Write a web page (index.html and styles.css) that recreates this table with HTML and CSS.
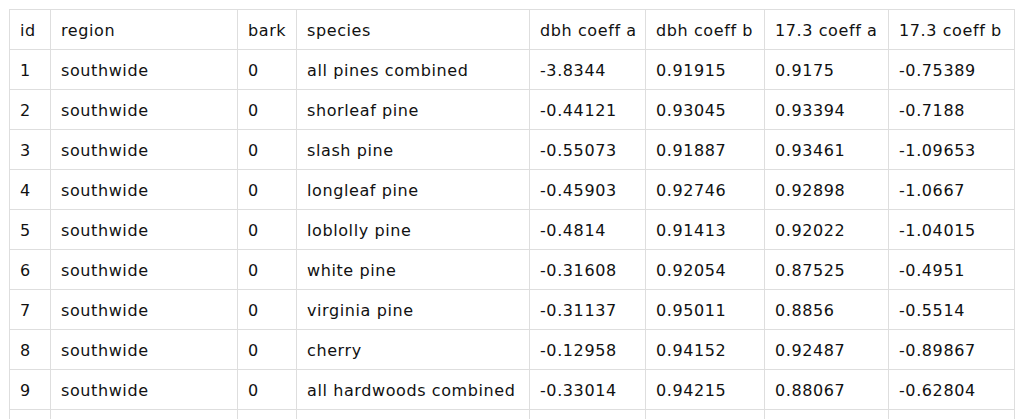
FILE: index.html
```
<!DOCTYPE html>
<html>
<head>
<meta charset="utf-8">
<link rel="stylesheet" href="styles.css">
</head>
<body>
<table class="data">
<colgroup>
<col class="w-id"><col class="w-region"><col class="w-bark"><col class="w-species"><col class="w-da"><col class="w-db"><col class="w-ta"><col class="w-tb">
</colgroup>
<thead>
<tr><th>id</th><th>region</th><th>bark</th><th>species</th><th>dbh coeff a</th><th>dbh coeff b</th><th>17.3 coeff a</th><th>17.3 coeff b</th></tr>
</thead>
<tbody>
<tr><td>1</td><td>southwide</td><td>0</td><td>all pines combined</td><td>-3.8344</td><td>0.91915</td><td>0.9175</td><td>-0.75389</td></tr>
<tr><td>2</td><td>southwide</td><td>0</td><td>shorleaf pine</td><td>-0.44121</td><td>0.93045</td><td>0.93394</td><td>-0.7188</td></tr>
<tr><td>3</td><td>southwide</td><td>0</td><td>slash pine</td><td>-0.55073</td><td>0.91887</td><td>0.93461</td><td>-1.09653</td></tr>
<tr><td>4</td><td>southwide</td><td>0</td><td>longleaf pine</td><td>-0.45903</td><td>0.92746</td><td>0.92898</td><td>-1.0667</td></tr>
<tr><td>5</td><td>southwide</td><td>0</td><td>loblolly pine</td><td>-0.4814</td><td>0.91413</td><td>0.92022</td><td>-1.04015</td></tr>
<tr><td>6</td><td>southwide</td><td>0</td><td>white pine</td><td>-0.31608</td><td>0.92054</td><td>0.87525</td><td>-0.4951</td></tr>
<tr><td>7</td><td>southwide</td><td>0</td><td>virginia pine</td><td>-0.31137</td><td>0.95011</td><td>0.8856</td><td>-0.5514</td></tr>
<tr><td>8</td><td>southwide</td><td>0</td><td>cherry</td><td>-0.12958</td><td>0.94152</td><td>0.92487</td><td>-0.89867</td></tr>
<tr><td>9</td><td>southwide</td><td>0</td><td>all hardwoods combined</td><td>-0.33014</td><td>0.94215</td><td>0.88067</td><td>-0.62804</td></tr>
<tr class="partial"><td></td><td></td><td></td><td></td><td></td><td></td><td></td><td></td></tr>
</tbody>
</table>
</body>
</html>
```
FILE: styles.css
```
html, body {
  margin: 0;
  padding: 0;
  background: #fff;
}
body {
  padding: 9px 0 0 9px;
  font-family: "DejaVu Sans", Verdana, sans-serif;
  font-size: 16px;
  letter-spacing: 0.6px;
  color: #111;
}
.data {
  border-collapse: collapse;
  table-layout: fixed;
  width: 1005px;
}
.data th,
.data td {
  border: 1px solid #dedede;
  padding: 11px 10px 8px;
  line-height: 20px;
  height: 20px;
  text-align: left;
  font-weight: normal;
  white-space: nowrap;
  overflow: hidden;
}
.w-id { width: 41px; }
.w-region { width: 187px; }
.w-bark { width: 59px; }
.w-species { width: 233px; }
.w-da { width: 116px; }
.w-db { width: 119px; }
.w-ta { width: 124px; }
.w-tb { width: 126px; }
```
